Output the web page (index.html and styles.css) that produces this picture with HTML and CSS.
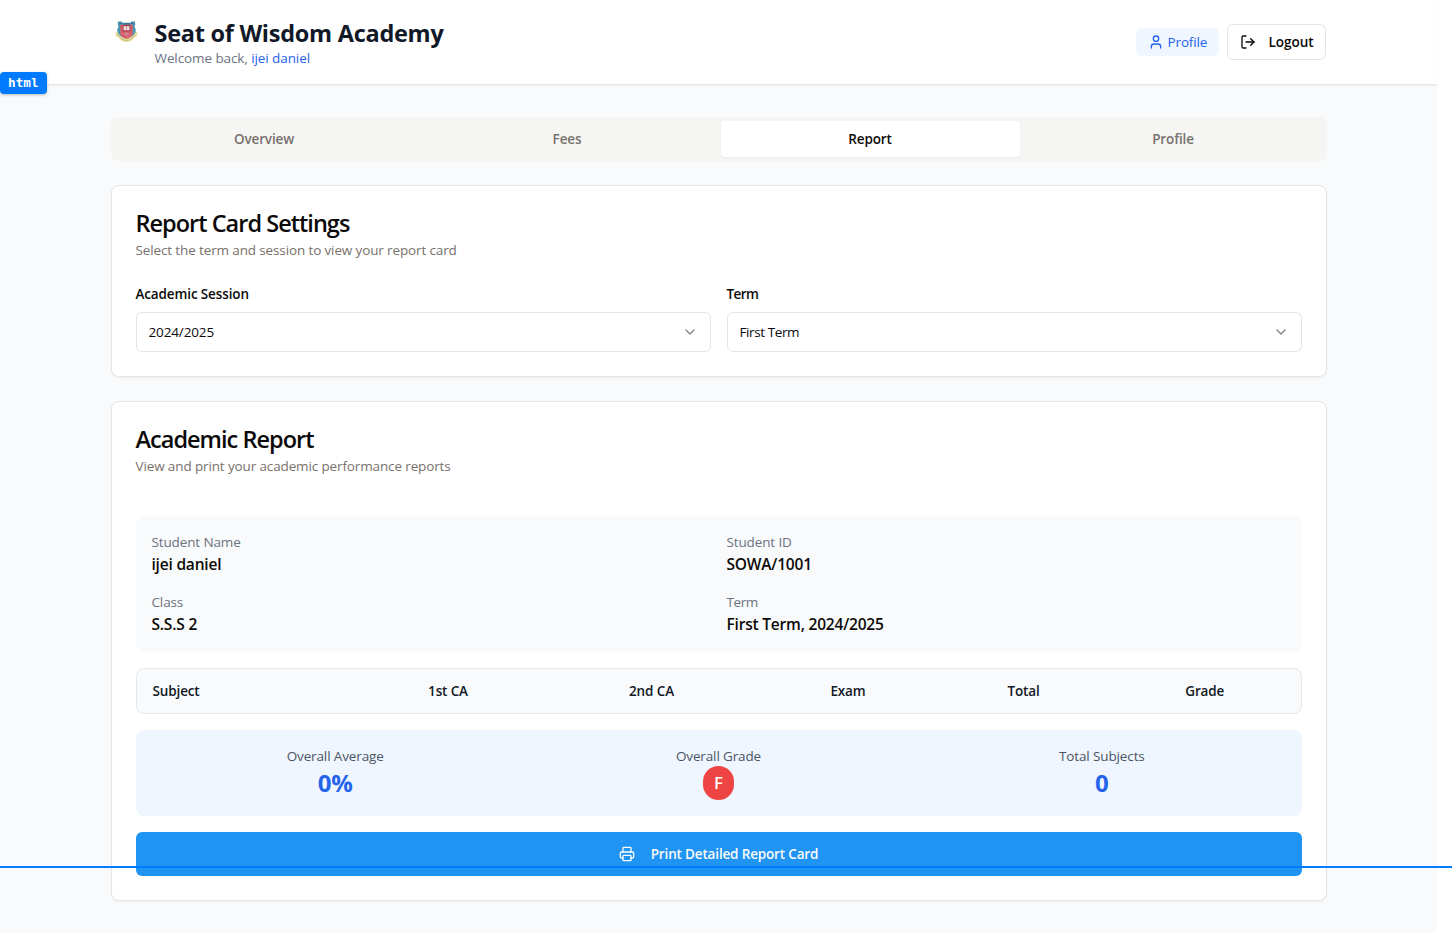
FILE: index.html
```
<!DOCTYPE html>
<html lang="en">
<head>
<meta charset="utf-8">
<title>Seat of Wisdom Academy</title>
<link rel="stylesheet" href="styles.css">
</head>
<body>
<div class="page">
  <header class="header">
    <div class="container header-row">
      <div class="brand">
        <svg class="crest" viewBox="0 0 24 24">
          <path d="M3 1.500h4l1 1.300h8l1-1.300h4v4l-.8 1 1.300 3v5l-9.500 6-9.500-6v-5l1.300-3-.8-1z" fill="#4a93b3"/>
          <path d="M5.500 5h13v9c0 3.200-4 5-6.500 6.200C9.500 19 5.500 17.200 5.500 14z" fill="#d8606a"/>
          <path d="M8 5h8v7H8z" fill="#a5404f"/>
          <path d="M9 6.500h6v4.200H9z" fill="#f3e6e6"/>
          <path d="M12 6.500v4.200" stroke="#b0606b" stroke-width=".7"/>
          <path d="M12 13v4M9.500 14.500h5" stroke="#c9a0a8" stroke-width=".9"/>
          <path d="M0 12.800l3.200.4C4.800 17 8 19 12 19.500c4-.5 7.200-2.500 8.800-6.300l3.200-.4-1.200 2.400.6 1.800-2.600.4c-2 3.200-4.800 5.300-8.800 5.600-4-.3-6.800-2.400-8.800-5.600L.6 17l.6-1.800z" fill="#e6da92"/>
          <path d="M3 15.500c2 3.500 5.500 5.500 9 5.800 3.500-.3 7-2.300 9-5.800" stroke="#98915f" stroke-width=".8" stroke-dasharray="1 1" fill="none"/>
          <path d="M5 3.500h2M17 3.500h2M9 4h6" stroke="#2a5c7a" stroke-width=".9"/>
        </svg>
        <div>
          <h1 class="school">Seat of Wisdom Academy</h1>
          <p class="welcome">Welcome back, <span class="user">ijei daniel</span></p>
        </div>
      </div>
      <div class="actions">
        <a class="profile-link"><svg class="icon" viewBox="0 0 24 24"><path d="M19 21v-2a4 4 0 0 0-4-4H9a4 4 0 0 0-4 4v2"/><circle cx="12" cy="7" r="4"/></svg><span>Profile</span></a>
        <button class="logout"><svg class="icon" viewBox="0 0 24 24"><path d="M9 21H5a2 2 0 0 1-2-2V5a2 2 0 0 1 2-2h4"/><path d="M16 17l5-5-5-5"/><path d="M21 12H9"/></svg><span>Logout</span></button>
      </div>
    </div>
  </header>

  <main class="container main">
    <nav class="tabs">
      <button class="tab">Overview</button>
      <button class="tab">Fees</button>
      <button class="tab tab-active">Report</button>
      <button class="tab">Profile</button>
    </nav>

    <section class="card">
      <h2 class="card-title">Report Card Settings</h2>
      <p class="card-sub">Select the term and session to view your report card</p>
      <div class="fields">
        <div class="field">
          <label class="label">Academic Session</label>
          <div class="select"><span>2024/2025</span><svg class="icon chevron" viewBox="0 0 24 24"><path d="M6 9l6 6 6-6"/></svg></div>
        </div>
        <div class="field">
          <label class="label label-term">Term</label>
          <div class="select"><span class="term">First Term</span><svg class="icon chevron" viewBox="0 0 24 24"><path d="M6 9l6 6 6-6"/></svg></div>
        </div>
      </div>
    </section>

    <section class="card">
      <h2 class="card-title">Academic Report</h2>
      <p class="card-sub">View and print your academic performance reports</p>
      <div class="report">
        <div class="student">
          <div><p class="muted">Student Name</p><p class="value">ijei daniel</p></div>
          <div><p class="muted">Student ID</p><p class="value">SOWA/1001</p></div>
          <div><p class="muted">Class</p><p class="value">S.S.S 2</p></div>
          <div><p class="muted term">Term</p><p class="value">First Term, 2024/2025</p></div>
        </div>
        <div class="table-head">
          <span class="subject">Subject</span><span>1st CA</span><span>2nd CA</span><span>Exam</span><span>Total</span><span>Grade</span>
        </div>
        <div class="summary">
          <div><p class="caption">Overall Average</p><p class="figure">0%</p></div>
          <div><p class="caption">Overall Grade</p><span class="grade">F</span></div>
          <div><p class="caption">Total Subjects</p><p class="figure">0</p></div>
        </div>
        <button class="print"><svg class="icon" viewBox="0 0 24 24"><path d="M6 18H4a2 2 0 0 1-2-2v-5a2 2 0 0 1 2-2h16a2 2 0 0 1 2 2v5a2 2 0 0 1-2 2h-2"/><path d="M6 9V3a1 1 0 0 1 1-1h10a1 1 0 0 1 1 1v6"/><rect x="6" y="14" width="12" height="8" rx="1"/></svg><span>Print Detailed Report Card</span></button>
      </div>
    </section>
  </main>
</div>
<div class="inspect-tag">html</div>
<div class="inspect-line"></div>
</body>
</html>
```

FILE: styles.css
```
* { box-sizing: border-box; margin: 0; padding: 0; }
html, body { height: 933px; overflow: hidden; background: #fff; }
body { font-family: "Open Sans", "Noto Sans", sans-serif; font-size: 13.500px; line-height: 20px; letter-spacing: -.13px; color: #0c0a09; }
button { font: inherit; letter-spacing: inherit; border: 0; background: none; }
.page { width: 1437px; height: 933px; background: #f9fafb; }
.container { width: 100%; max-width: 1280px; margin: 0 auto; padding: 0 32px; }
.header { background: #fff; border-bottom: 1px solid #e7e5e4; box-shadow: 0 1px 2px rgba(0,0,0,.05); }
.header-row { display: flex; justify-content: space-between; align-items: center; height: 84px; }
.brand { display: flex; gap: 16px; align-items: flex-start; }
.crest { width: 23px; height: 23px; margin: 4px .500px 0 4.500px; }
.school { font-size: 23.500px; line-height: 32px; font-weight: 700; letter-spacing: -.27px; color: #111827; padding-top: 1px; height: 32px; }
.welcome { color: #6b7280; letter-spacing: -.09px; }
.user { color: #2563eb; }
.actions { display: flex; align-items: center; gap: 8px; margin-right: 1px; }
.icon { width: 16px; height: 16px; flex: none; fill: none; stroke: currentColor; stroke-width: 2; stroke-linecap: round; stroke-linejoin: round; }
.profile-link { display: flex; align-items: center; gap: 4px; height: 28px; width: 83px; padding: 0 12px; border-radius: 6px; background: #eff6ff; color: #2563eb; white-space: nowrap; }
.logout { display: flex; align-items: center; gap: 13px; height: 36px; width: 99px; padding: 0 12px; border: 1px solid #e7e5e4; border-radius: 6px; font-weight: 600; letter-spacing: 0; white-space: nowrap; color: #0c0a09; }
.main { display: flex; flex-direction: column; gap: 24px; padding-top: 32px; }
.tabs { display: grid; grid-template-columns: repeat(4, 1fr); gap: 4px; padding: 4px; height: 44px; border-radius: 6px; background: #f5f5f4; }
.tab { border-radius: 4px; font-weight: 600; color: #78716c; }
.tab-active { background: #fff; color: #0c0a09; box-shadow: 0 1px 2px rgba(0,0,0,.05); }
.card { padding: 24px; border: 1px solid #e7e5e4; border-radius: 8px; background: #fff; box-shadow: 0 1px 2px rgba(0,0,0,.05); }
.card-title { font-size: 23.500px; line-height: 24px; font-weight: 600; letter-spacing: -.98px; padding-top: 1px; height: 24px; margin-bottom: 6px; }
.card-sub { color: #78716c; }
.fields { display: grid; grid-template-columns: 1fr 1fr; gap: 16px; margin-top: 24px; }
.label { display: block; font-weight: 600; margin-bottom: 8px; }
.label-term { letter-spacing: -.6px; }
.term { letter-spacing: -.4px; }
.select { display: flex; justify-content: space-between; align-items: center; height: 40px; padding: 0 12px; border: 1px solid #e7e5e4; border-radius: 6px; }
.chevron { opacity: .5; }
.report { display: flex; flex-direction: column; gap: 16px; margin-top: 40px; }
.student { display: grid; grid-template-columns: 1fr 1fr; gap: 16px; padding: 16px; border-radius: 8px; background: #f9fafb; }
.muted { color: #6b7280; }
.value { font-size: 15.500px; line-height: 24px; font-weight: 600; letter-spacing: -.2px; }
.table-head { display: grid; grid-template-columns: 214.500fr 194fr 213fr 180fr 171fr 191.500fr; align-items: center; height: 46px; border: 1px solid #e5e7eb; border-radius: 8px; background: #f9fafb; font-weight: 600; color: #111827; text-align: center; }
.subject { text-align: left; padding-left: 16px; }
.summary { display: grid; grid-template-columns: repeat(3, 1fr); gap: 16px; height: 86px; padding: 16px; border-radius: 8px; background: #eff6ff; text-align: center; }
.caption { color: #4b5563; }
.figure { font-size: 24px; line-height: 34px; font-weight: 700; letter-spacing: -.2px; color: #2563eb; }
.grade { display: flex; align-items: center; justify-content: center; width: 31px; height: 34px; margin: 0 auto; border-radius: 15.500px; background: #ef4444; color: #fff; font-size: 17px; font-weight: 600; }
.print { display: flex; align-items: center; justify-content: center; gap: 16px; height: 44px; border-radius: 6px; background: #2094f3; color: #fafaf9; font-weight: 600; letter-spacing: -.16px; }
.inspect-tag { position: absolute; left: 0; top: 72px; width: 47px; height: 22px; padding-left: 8px; border-radius: 4px; background: #007aff; color: #fff; font: 700 12.700px/21px "DejaVu Sans Mono", monospace; letter-spacing: 0; box-shadow: 0 1px 3px rgba(0,0,0,.25); }
.inspect-line { position: absolute; left: 0; top: 866px; width: 1452px; height: 2px; background: #007aff; }
```
